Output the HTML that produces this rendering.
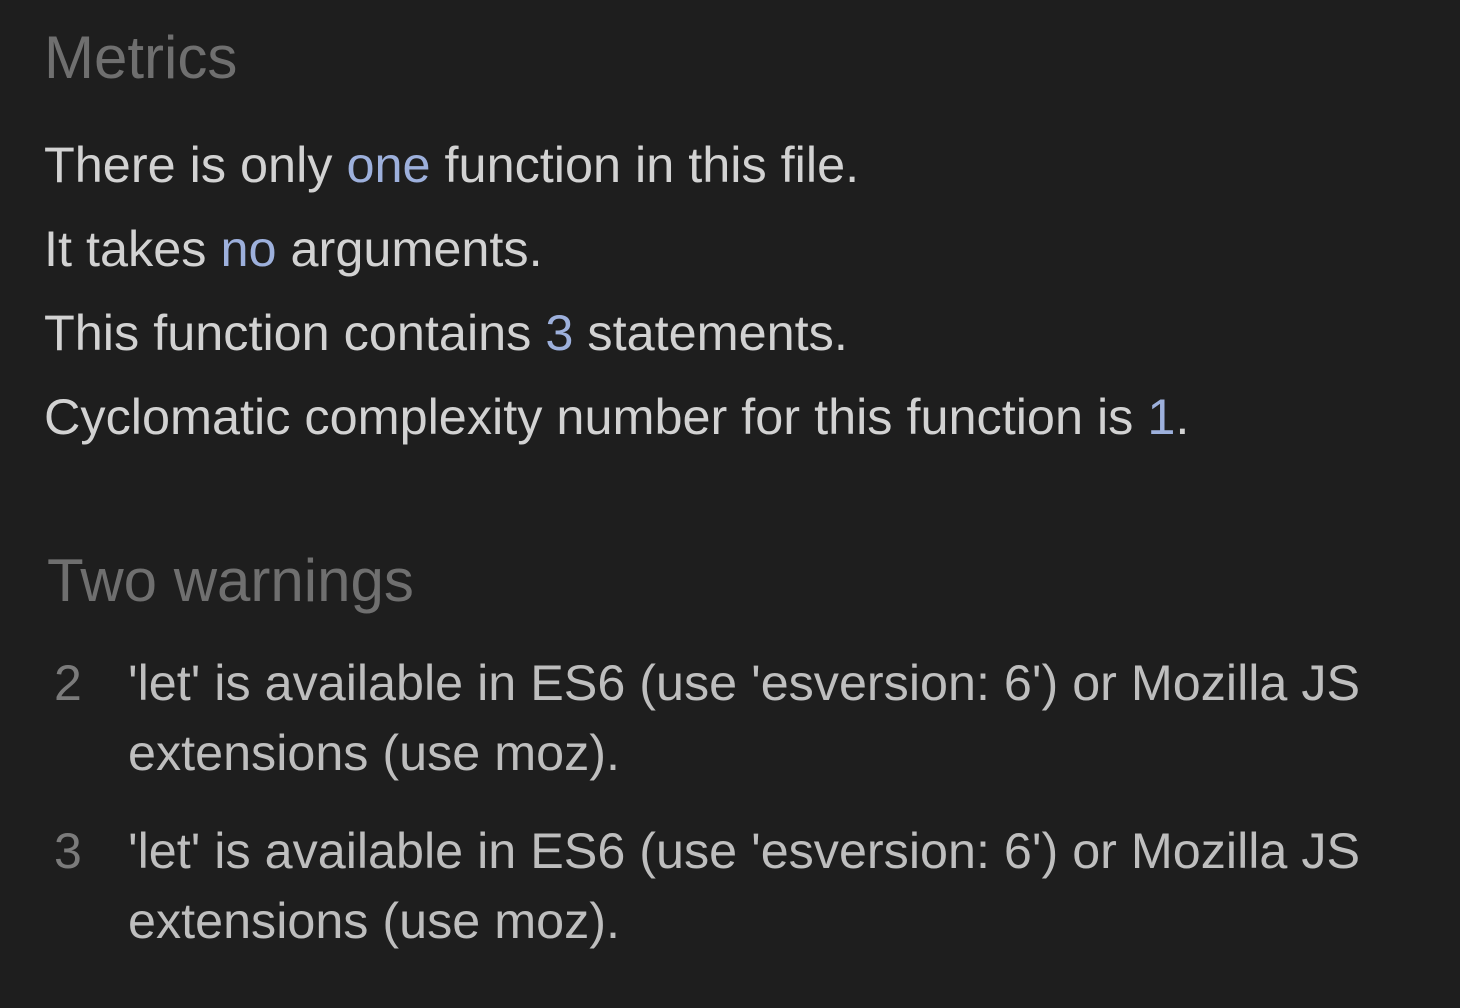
<!DOCTYPE html>
<html><head><meta charset="utf-8"><style>
html,body{margin:0;padding:0;background:#1e1e1e;width:1460px;height:1008px;overflow:hidden;font-family:"Liberation Sans",Arial,sans-serif}
.a{position:absolute;white-space:nowrap}
.h{font-size:60px;line-height:70px;color:#6f6f6f;left:44px}
.b{font-size:50.4px;line-height:84px;color:#d2d2d2;left:44px}
.n{color:#9db0dc}
.w{font-size:50.3px;line-height:70px;color:#bebebe;left:128px}
.num{font-size:50px;line-height:70px;color:#7b7b7b;left:54px}
</style></head><body>
<div class="a h" style="top:23px">Metrics</div>
<div class="a b" style="top:123px">There is only <span class="n">one</span> function in this file.<br>It takes <span class="n">no</span> arguments.<br>This function contains <span class="n">3</span> statements.<br>Cyclomatic complexity number for this function is <span class="n">1</span>.</div>
<div class="a h" style="top:546px;left:47px">Two warnings</div>
<div class="a num" style="top:648px">2</div>
<div class="a w" style="top:648px">'let' is available in ES6 (use 'esversion: 6') or Mozilla JS<br>extensions (use moz).</div>
<div class="a num" style="top:816px">3</div>
<div class="a w" style="top:816px">'let' is available in ES6 (use 'esversion: 6') or Mozilla JS<br>extensions (use moz).</div>
</body></html>
